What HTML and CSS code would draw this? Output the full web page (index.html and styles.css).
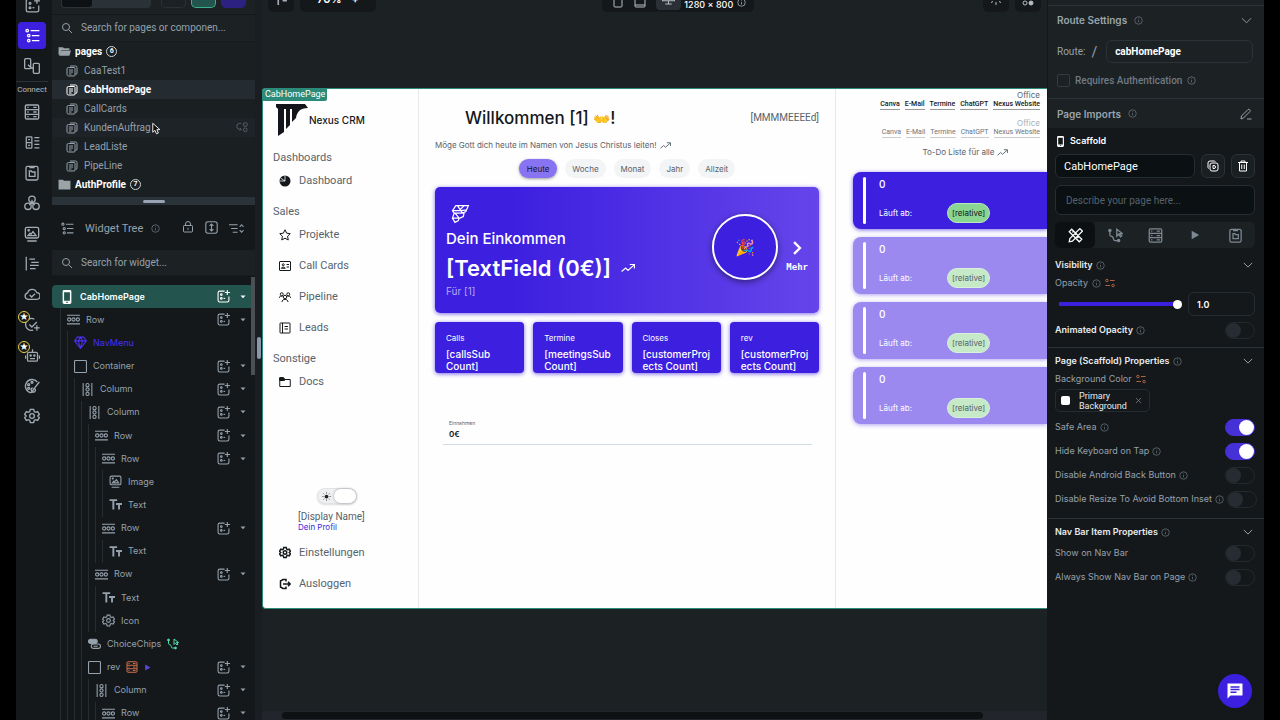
FILE: index.html
```html
<!DOCTYPE html>
<html lang="de">
<head>
<meta charset="utf-8">
<title>CabHomePage – Nexus CRM</title>
<link rel="stylesheet" href="styles.css">
</head>
<body>
<svg class="sprite" aria-hidden="true">
  <symbol id="search" viewBox="0 0 24 24"><circle cx="10" cy="10" r="7"/><path d="M15.5 15.5 22 22"/></symbol>
  <symbol id="info" viewBox="0 0 24 24"><circle cx="12" cy="12" r="10"/><path d="M12 11v6M12 6.500v2"/></symbol>
  <symbol id="chev" viewBox="0 0 24 24"><path d="M2 7l10 10L22 7"/></symbol>
  <symbol id="add" viewBox="0 0 24 24"><path d="M14 2H5a3 3 0 0 0-3 3v14a3 3 0 0 0 3 3h14a3 3 0 0 0 3-3v-7M19 0v9M14.500 4.500H24"/><circle cx="8" cy="8.500" r="1.500"/><circle cx="8" cy="15.500" r="1.500"/><path d="M12 15.500h3"/></symbol>
  <symbol id="list" viewBox="0 0 24 24"><circle cx="3.500" cy="4" r="2"/><circle cx="6" cy="12" r="2"/><circle cx="6" cy="20" r="2"/><path d="M9 4h14M11 12h12M11 20h12"/></symbol>
  <symbol id="flow" viewBox="0 0 24 24"><rect x="1" y="1" width="9" height="15" rx="1.500"/><rect x="14" y="8" width="9" height="15" rx="1.500"/><path d="M6 10l5 5h3"/></symbol>
  <symbol id="db" viewBox="0 0 24 24"><rect x="2" y="1.500" width="20" height="21" rx="2"/><path d="M2 8.500h20M2 15.500h20M14 5h5M14 12h5M14 19h5M5 5h2M5 12h2M5 19h2"/></symbol>
  <symbol id="types" viewBox="0 0 24 24"><rect x="2" y="3" width="9" height="18" rx="1"/><path d="M2 12h9M15 4h8M15 9.500h8M15 15h8M15 20.500h8M5 7.500h3M5 16.500h3"/></symbol>
  <symbol id="clip" viewBox="0 0 24 24"><rect x="3" y="2" width="18" height="20.500" rx="2.500"/><path d="M9 2v2h6V2M8 9h3l1 1.500h4.500V17H8z"/></symbol>
  <symbol id="cubes" viewBox="0 0 24 24"><circle cx="12" cy="6.500" r="4.800"/><circle cx="6" cy="17" r="4.800"/><circle cx="18" cy="17" r="4.800"/><path d="M12 7v5l-4 3M12 12l4 3"/></symbol>
  <symbol id="image" viewBox="0 0 24 24"><rect x="2" y="2" width="20" height="16" rx="2.500"/><path d="M5 22.500h14M6 14.500h12l-4.500-6-3 4-1.500-1.500z"/><circle cx="7" cy="6.500" r="1"/></symbol>
  <symbol id="gantt" viewBox="0 0 24 24"><path d="M2 1v22M7 5h9M10 10h12M8 15h14M8 20h9"/></symbol>
  <symbol id="cloud" viewBox="0 0 24 24"><path d="M6 20a5 5 0 0 1-.5-9.800A7 7 0 0 1 19 10a5 5 0 0 1 0 10zM8.500 13.500l3 3 5-5"/></symbol>
  <symbol id="checkadd" viewBox="0 0 24 24"><path d="M19 8l-8 8-4-4M15 3.500A9.500 9.500 0 1 0 13 21M19 13v9M14.500 17.500h9"/></symbol>
  <symbol id="robot" viewBox="0 0 24 24"><rect x="4" y="7" width="16" height="14" rx="2"/><path d="M12 7V2M1 12v5M23 12v5M8 17h8"/><circle cx="9" cy="12" r="1"/><circle cx="15" cy="12" r="1"/></symbol>
  <symbol id="palette" viewBox="0 0 24 24"><path d="M20 6A10 10 0 1 0 10 22c3 0 2-3 1-4s0-3 2-3"/><circle cx="7" cy="10" r="1.500"/><circle cx="12" cy="6.500" r="1.500"/><circle cx="7" cy="15.500" r="1.500"/><path d="M23 6l-8 10M15 16c-2 1-1 4-3 5 3 1 6-1 5-4z"/></symbol>
  <symbol id="gear" viewBox="0 0 24 24"><path d="M9.500 2h5l.8 3.200 2 1.200 3.200-1 2.500 4.300L20.600 12l2.400 2.300-2.500 4.300-3.200-1-2 1.200-.8 3.200h-5l-.8-3.200-2-1.200-3.200 1L1 14.300 3.400 12 1 9.700l2.500-4.300 3.200 1 2-1.200z"/><circle cx="12" cy="12" r="3.500"/></symbol>
  <symbol id="pagesic" viewBox="0 0 24 24"><path d="M8 2h11a3 3 0 0 1 3 3v11a3 3 0 0 1-3 3M5 5h11a2 2 0 0 1 2 2v13a2 2 0 0 1-2 2H5a3 3 0 0 1-3-3V8a3 3 0 0 1 3-3zM6 10h8M6 14h8M6 18h5"/></symbol>
  <symbol id="lock" viewBox="0 0 24 24"><rect x="3" y="9" width="18" height="13" rx="1.500"/><path d="M7 9V6a5 5 0 0 1 10 0v3M12 13.500v4"/></symbol>
  <symbol id="updown" viewBox="0 0 24 24"><rect x="1.500" y="1.500" width="21" height="21" rx="4"/><path d="M12 6v12M8.500 9 12 5.500 15.500 9M8.500 15l3.500 3.500 3.500-3.500"/></symbol>
  <symbol id="sort" viewBox="0 0 28 24"><path d="M0 5h16M4 12h12M7 19h9M20 9l3.500-4L27 9M20 15l3.500 4 3.500-4"/></symbol>
  <symbol id="phone" viewBox="0 0 24 24"><path fill="currentColor" fill-rule="evenodd" stroke="none" d="M7 0h10a2.500 2.500 0 0 1 2.500 2.500v19A2.500 2.500 0 0 1 17 24H7a2.500 2.500 0 0 1-2.500-2.500v-19A2.500 2.500 0 0 1 7 0zm0 4v14.500h10V4zm3.500 16v2h3v-2z"/></symbol>
  <symbol id="row" viewBox="0 0 24 24"><path d="M0 4h24M0 20h24"/><circle cx="4" cy="12" r="3"/><circle cx="12" cy="12" r="3"/><circle cx="20" cy="12" r="3"/></symbol>
  <symbol id="col" viewBox="0 0 24 24"><path d="M4 0v24M20 0v24"/><circle cx="12" cy="4" r="3"/><circle cx="12" cy="12" r="3"/><circle cx="12" cy="20" r="3"/></symbol>
  <symbol id="gem" viewBox="0 0 24 24"><path d="M6 2h12l5 7-11 14L1 9zM1 9h22M8 9l4 13 4-13-4-7z"/></symbol>
  <symbol id="box" viewBox="0 0 24 24"><rect x="1" y="1" width="22" height="22" rx="1.500"/></symbol>
  <symbol id="tt" viewBox="0 0 24 24"><path stroke-width="3.500" d="M1 4h14M8 4v17M13 11h11M18.500 11v10"/></symbol>
  <symbol id="chipsic" viewBox="0 0 24 24"><rect x="1" y="4" width="16" height="8" rx="4" fill="currentColor"/><rect x="6" y="13" width="17" height="8" rx="4"/><path d="M10 17h8"/></symbol>
  <symbol id="action" viewBox="0 0 24 24"><circle cx="3" cy="4" r="1.800" fill="currentColor"/><path d="M3 5v6c0 3 4 2 5 4s0 5 3 5h4M14 2v11l3-3 3 4 2-1.500-3-3.500h4z"/><circle cx="17" cy="20" r="1.800" fill="currentColor"/></symbol>
  <symbol id="play" viewBox="0 0 24 24"><path fill="currentColor" stroke="none" d="M4 2v20l18-10z"/></symbol>
  <symbol id="caret" viewBox="0 0 24 24"><path fill="currentColor" stroke="none" d="M2 6h20L12 17z"/></symbol>
  <symbol id="vars" viewBox="0 0 24 24"><circle cx="4.500" cy="6" r="3"/><circle cx="19.500" cy="18" r="3"/><path d="M12 6h11M1 18h11"/></symbol>
  <symbol id="trend" viewBox="0 0 24 24"><path d="M1 18l7-6 4 4L22 7M15 6h8v7"/></symbol>
  <symbol id="star" viewBox="0 0 24 24"><path d="M12 1.500l3.200 6.800 7.300 1-5.400 5.200 1.400 7.500L12 18.400 5.500 22l1.400-7.500L1.500 9.300l7.300-1z"/></symbol>
  <symbol id="card" viewBox="0 0 24 24"><rect x="1" y="3" width="22" height="18" rx="1"/><circle cx="8.500" cy="9.500" r="2"/><path d="M4.500 16.500c1-3 7-3 8 0zM15 9h5M15 14h5"/></symbol>
  <symbol id="people" viewBox="0 0 24 24"><circle cx="12" cy="12" r="3.500"/><circle cx="5.500" cy="6.500" r="3"/><circle cx="18.500" cy="6.500" r="3"/><path d="M6 22c0-7 12-7 12 0M0 14c1-4 4-4 7-3M24 14c-1-4-4-4-7-3"/></symbol>
  <symbol id="leads" viewBox="0 0 24 24"><rect x="2" y="2" width="20" height="20" rx="1"/><path d="M7 2v20M11 9h7M11 14h7"/></symbol>
  <symbol id="docs" viewBox="0 0 24 24"><path d="M1.500 21V3.500H9L11.500 7h11v14z"/><path fill="currentColor" d="M1.500 3.500H9L11 7v2H1.500z"/></symbol>
  <symbol id="logout" viewBox="0 0 24 24"><path d="M14 7V3H8L3 6v12l5 3h6v-4M8 12h14M18 7.500l4.500 4.500-4.500 4.500"/></symbol>
  <symbol id="pie" viewBox="0 0 24 24"><circle cx="12" cy="12" r="11" fill="currentColor" stroke="none"/><path stroke="#fff" stroke-width="1.500" d="M12 12 L12 1 M12 12 L3 6 M12 12H1"/></symbol>
  <symbol id="copy" viewBox="0 0 24 24"><rect x="6" y="6" width="16" height="16" rx="4"/><path d="M3 17a4 4 0 0 1-1-3V6a4 4 0 0 1 4-4h8c2 0 3 1 3 1M12 11v6h2a3 3 0 0 0 0-6z"/></symbol>
  <symbol id="trash" viewBox="0 0 24 24"><path d="M2 5h20M8 5V2h8v3M5 5v17h14V5M9.500 9v9M14.500 9v9"/></symbol>
  <symbol id="pencil" viewBox="0 0 24 24"><path d="M2 22l1-6L16 3c2-2 6 2 4 4L7 20zM14 22h9"/></symbol>
  <symbol id="design" viewBox="0 0 24 24"><path d="M6 2 22 18l-4 4L2 6zM19 1l4 4L7 21l-5 1 1-5zM9 5 7 7M13 9l-2 2M17 14l-2 2"/></symbol>
  <symbol id="x" viewBox="0 0 24 24"><path d="M3 3l18 18M21 3 3 21"/></symbol>
</svg>

<div class="app">
  <nav class="rail">
    <a class="rail-top" href="#"><svg class="i s15"><use href="#add"/></svg></a>
    <a class="rail-cell on" href="#"><svg class="i s15"><use href="#list"/></svg></a>
    <a class="rail-cell" href="#"><svg class="i s16"><use href="#flow"/></svg></a>
    <div class="rail-label">Connect</div>
    <div class="rail-group">
      <a class="rail-cell" href="#"><svg class="i s16"><use href="#db"/></svg></a>
      <a class="rail-cell" href="#"><svg class="i s15"><use href="#types"/></svg></a>
      <a class="rail-cell" href="#"><svg class="i s16"><use href="#clip"/></svg></a>
      <a class="rail-cell" href="#"><svg class="i s16"><use href="#cubes"/></svg></a>
      <a class="rail-cell" href="#"><svg class="i s16"><use href="#image"/></svg></a>
      <a class="rail-cell" href="#"><svg class="i s15"><use href="#gantt"/></svg></a>
      <a class="rail-cell" href="#"><svg class="i s16"><use href="#cloud"/></svg></a>
      <a class="rail-cell" href="#"><svg class="i s15"><use href="#checkadd"/></svg><span class="star">★</span></a>
      <a class="rail-cell" href="#"><svg class="i s15"><use href="#robot"/></svg><span class="star">★</span></a>
      <a class="rail-cell" href="#"><svg class="i s16"><use href="#palette"/></svg></a>
      <a class="rail-cell" href="#"><svg class="i s16"><use href="#gear"/></svg></a>
    </div>
  </nav>

  <aside class="panel">
    <div class="panel-top">
      <div class="seg"><span class="seg-on"></span></div>
      <span class="tb"></span><span class="tb green"></span><span class="tb violet"></span>
    </div>
    <label class="find"><svg class="i s12"><use href="#search"/></svg><input type="text" aria-label="Search pages" placeholder="Search for pages or componen..."></label>
    <ul class="pages">
      <li class="folder"><svg class="s13" viewBox="0 0 24 24"><path fill="#9aa3a8" d="M1 4h8l2 2h10v3H7l-3 9H1z"/><path fill="#9aa3a8" d="M7 10h17l-3 10H2z"/></svg>pages<span class="count">6</span></li>
      <li><svg class="i s12"><use href="#pagesic"/></svg>CaaTest1</li>
      <li class="sel"><svg class="i s12"><use href="#pagesic"/></svg>CabHomePage</li>
      <li><svg class="i s12"><use href="#pagesic"/></svg>CallCards</li>
      <li class="hover"><svg class="i s12"><use href="#pagesic"/></svg>KundenAuftrag
        <svg class="cursor" viewBox="0 0 12 16"><path d="M1 1v12l3-2.500 2 4.500 2.500-1-2-4.500h4z" fill="#111" stroke="#fff" stroke-width="1.200"/></svg>
        <svg class="i s11 end" viewBox="0 0 24 24"><path d="M9 3H6a5 5 0 0 0 0 13h3M6 13l3 3-3 3"/><rect x="14" y="2" width="8" height="7" rx="1"/><circle cx="18" cy="17" r="4"/></svg></li>
      <li><svg class="i s12"><use href="#pagesic"/></svg>LeadListe</li>
      <li><svg class="i s12"><use href="#pagesic"/></svg>PipeLine</li>
      <li class="folder"><svg class="s13" viewBox="0 0 24 24"><path fill="#9aa3a8" d="M1 3h8l2 2h12v16H1z"/></svg>AuthProfile<span class="count">7</span></li>
    </ul>
    <div class="hsplit"><span></span></div>
    <div class="tree-head"><svg class="i s13"><use href="#list"/></svg><span>Widget Tree</span><svg class="i s9 dim"><use href="#info"/></svg>
      <div class="tools"><svg class="i s12"><use href="#lock"/></svg><svg class="i s13"><use href="#updown"/></svg><svg class="i s15"><use href="#sort"/></svg></div>
    </div>
    <label class="find second"><svg class="i s12"><use href="#search"/></svg><input type="text" aria-label="Search widgets" placeholder="Search for widget..."></label>
    <div class="tree-wrap">
      <ul class="tree">
        <li class="root"><svg class="i s14"><use href="#phone"/></svg>CabHomePage<span class="ops"><svg class="i s13"><use href="#add"/></svg><svg class="i s6"><use href="#caret"/></svg></span></li>
        <li class="l1"><svg class="i s13"><use href="#row"/></svg>Row<span class="ops"><svg class="i s13"><use href="#add"/></svg><svg class="i s6"><use href="#caret"/></svg></span></li>
        <li class="l2 nav"><svg class="i s13"><use href="#gem"/></svg>NavMenu</li>
        <li class="l2"><svg class="i s13"><use href="#box"/></svg>Container<span class="ops"><svg class="i s13"><use href="#add"/></svg><svg class="i s6"><use href="#caret"/></svg></span></li>
        <li class="l3"><svg class="i s13"><use href="#col"/></svg>Column<span class="ops"><svg class="i s13"><use href="#add"/></svg><svg class="i s6"><use href="#caret"/></svg></span></li>
        <li class="l4"><svg class="i s13"><use href="#col"/></svg>Column<span class="ops"><svg class="i s13"><use href="#add"/></svg><svg class="i s6"><use href="#caret"/></svg></span></li>
        <li class="l5"><svg class="i s13"><use href="#row"/></svg>Row<span class="ops"><svg class="i s13"><use href="#add"/></svg><svg class="i s6"><use href="#caret"/></svg></span></li>
        <li class="l6"><svg class="i s13"><use href="#row"/></svg>Row<span class="ops"><svg class="i s13"><use href="#add"/></svg><svg class="i s6"><use href="#caret"/></svg></span></li>
        <li class="l7"><svg class="i s13"><use href="#image"/></svg>Image</li>
        <li class="l7"><svg class="i s13"><use href="#tt"/></svg>Text</li>
        <li class="l6"><svg class="i s13"><use href="#row"/></svg>Row<span class="ops"><svg class="i s13"><use href="#add"/></svg><svg class="i s6"><use href="#caret"/></svg></span></li>
        <li class="l7"><svg class="i s13"><use href="#tt"/></svg>Text</li>
        <li class="l5"><svg class="i s13"><use href="#row"/></svg>Row<span class="ops"><svg class="i s13"><use href="#add"/></svg><svg class="i s6"><use href="#caret"/></svg></span></li>
        <li class="l6"><svg class="i s13"><use href="#tt"/></svg>Text</li>
        <li class="l6"><svg class="i s13"><use href="#gear"/></svg>Icon</li>
        <li class="l4"><svg class="i s13"><use href="#chipsic"/></svg>ChoiceChips<svg class="i s12 mint"><use href="#action"/></svg></li>
        <li class="l4"><svg class="i s13"><use href="#box"/></svg>rev<svg class="i s12 orange"><use href="#db"/></svg><svg class="i s7 blue"><use href="#play"/></svg><span class="ops"><svg class="i s13"><use href="#add"/></svg><svg class="i s6"><use href="#caret"/></svg></span></li>
        <li class="l5"><svg class="i s13"><use href="#col"/></svg>Column<span class="ops"><svg class="i s13"><use href="#add"/></svg><svg class="i s6"><use href="#caret"/></svg></span></li>
        <li class="l6"><svg class="i s13"><use href="#row"/></svg>Row<span class="ops"><svg class="i s13"><use href="#add"/></svg><svg class="i s6"><use href="#caret"/></svg></span></li>
      </ul>
      <span class="vbar"></span>
    </div>
  </aside>

  <div class="vsplit"><span></span></div>

  <main class="canvas">
    <div class="canvas-top">
      <div class="pill short"><svg class="s13" viewBox="0 0 24 24"><path stroke="#aab" stroke-width="3" d="M6 0v22M14 14h8"/></svg></div>
      <div class="pill zoom">70%<span>+</span></div>
      <div class="pill devices">
        <svg class="i s12" viewBox="0 0 24 24"><rect x="4" y="0" width="16" height="22" rx="2"/></svg><svg class="i s12" viewBox="0 0 24 24"><rect x="2" y="0" width="20" height="22" rx="2"/><path d="M2 18h20"/></svg>
        <span class="desk"><svg class="i s13" viewBox="0 0 24 24"><path d="M1 2h22v14H1zM12 16v5M6 22h12"/></svg></span><b>1280 × 800</b><svg class="i s9"><use href="#info"/></svg></div>
      <div class="pill short right"><svg class="i s12" viewBox="0 0 24 24"><path d="M12 16v6M5 14l-2 4M19 14l2 4"/></svg></div>
      <div class="pill short"><svg class="i s12" viewBox="0 0 24 24"><circle cx="6" cy="18" r="4"/><circle cx="18" cy="18" r="4" fill="currentColor"/><path d="M2 10h20"/></svg></div>
    </div>

    <section class="board">
      <span class="tag">CabHomePage</span>
      <div class="side">
        <div class="brand"><svg viewBox="0 0 32 32"><path fill="#14151a" d="M0 0h29l3 4c-8 0-11 4-12 10l-4 4V5h-2v16l-4 4V5H8v23l-6 4V5L0 3z"/></svg>Nexus CRM</div>
        <h4>Dashboards</h4>
        <a href="#"><svg class="i s12"><use href="#pie"/></svg>Dashboard</a>
        <h4>Sales</h4>
        <a href="#"><svg class="i s12"><use href="#star"/></svg>Projekte</a>
        <a href="#"><svg class="i s12"><use href="#card"/></svg>Call Cards</a>
        <a href="#"><svg class="i s12"><use href="#people"/></svg>Pipeline</a>
        <a href="#"><svg class="i s12"><use href="#leads"/></svg>Leads</a>
        <h4>Sonstige</h4>
        <a href="#"><svg class="i s12"><use href="#docs"/></svg>Docs</a>
        <div class="profile">
          <div class="mode"><svg class="s9" viewBox="0 0 24 24"><circle cx="12" cy="12" r="5" fill="#222"/><path stroke="#222" stroke-width="2" d="M12 1v3M12 20v3M1 12h3M20 12h3M4 4l2 2M18 18l2 2M4 20l2-2M18 6l2-2"/></svg><span></span></div>
          <span class="who">[Display Name]</span>
          <a class="plain" href="#">Dein Profil</a>
        </div>
        <a href="#"><svg class="i s13 strong"><use href="#gear"/></svg>Einstellungen</a>
        <a href="#"><svg class="i s12 strong"><use href="#logout"/></svg>Ausloggen</a>
      </div>

      <div class="main">
        <header><h1>Willkommen [1] <span class="emoji">👐</span>!</h1><span>[MMMMEEEEd]</span></header>
        <p class="quote">Möge Gott dich heute im Namen von Jesus Christus leiten!<svg class="i s11"><use href="#trend"/></svg></p>
        <div class="chips"><button class="on">Heute</button><button>Woche</button><button>Monat</button><button>Jahr</button><button>Allzeit</button></div>
        <div class="hero">
          <div class="hero-text">
            <svg class="ff" viewBox="0 0 24 24"><path fill="none" stroke="#fff" stroke-width="1.500" d="M7 2h15l-3 7-4 2H5L3 8zM3 8h10l7-1M5 11l-2 6h9l4-2 1-5M3 17l3 5 4-2 1-3M9 2l6 9M17 2l-6 6M6 11l5 6"/></svg>
            <h2>Dein Einkommen</h2>
            <div class="amount">[TextField (0€)]<svg class="i s14"><use href="#trend"/></svg></div>
            <span class="for">Für [1]</span>
          </div>
          <div class="ring"><span class="emoji">🎉</span></div>
          <div class="more"><svg viewBox="0 0 24 24"><path fill="none" stroke="#fff" stroke-width="4" d="M7 2l10 10L7 22"/></svg>Mehr</div>
        </div>
        <div class="stats">
          <div><small>Calls</small><b>[callsSub Count]</b></div>
          <div><small>Termine</small><b>[meetingsSub Count]</b></div>
          <div><small>Closes</small><b>[customerProj ects Count]</b></div>
          <div><small>rev</small><b>[customerProj ects Count]</b></div>
        </div>
        <div class="income"><small>Einnahmen</small><b>0€</b></div>
      </div>

      <div class="office">
        <div class="links"><span>Office</span><nav><a href="#">Canva</a><a href="#">E-Mail</a><a href="#">Termine</a><a href="#">ChatGPT</a><a href="#">Nexus Website</a></nav></div>
        <div class="links faded"><span>Office</span><nav><a href="#">Canva</a><a href="#">E-Mail</a><a href="#">Termine</a><a href="#">ChatGPT</a><a href="#">Nexus Website</a></nav></div>
        <p class="todo">To-Do Liste für alle<svg class="i s11"><use href="#trend"/></svg></p>
        <div class="task"><i></i><div><b>0</b><p><span>Läuft ab:</span><em>[relative]</em></p></div></div>
        <div class="task pale"><i></i><div><b>0</b><p><span>Läuft ab:</span><em>[relative]</em></p></div></div>
        <div class="task pale"><i></i><div><b>0</b><p><span>Läuft ab:</span><em>[relative]</em></p></div></div>
        <div class="task pale"><i></i><div><b>0</b><p><span>Läuft ab:</span><em>[relative]</em></p></div></div>
      </div>
    </section>
    <div class="hbar"><span></span></div>
  </main>

  <aside class="inspector">
    <div class="upper">
      <div class="cap"></div>
      <div class="head">Route Settings<svg class="i s9"><use href="#info"/></svg><svg class="i s11 end"><use href="#chev"/></svg></div>
      <div class="route"><label for="route">Route:</label><span>/</span><input id="route" type="text" value="cabHomePage"></div>
      <label class="auth"><input type="checkbox">Requires Authentication<svg class="i s9"><use href="#info"/></svg></label>
      <div class="head line">Page Imports<svg class="i s9"><use href="#info"/></svg><svg class="i s12 end"><use href="#pencil"/></svg></div>
    </div>
    <div class="group">
      <div class="scaffold"><svg class="i s11"><use href="#phone"/></svg>Scaffold</div>
      <div class="name"><input type="text" aria-label="Page name" value="CabHomePage"><button aria-label="Copy"><svg class="i s12"><use href="#copy"/></svg></button><button aria-label="Delete"><svg class="i s12"><use href="#trash"/></svg></button></div>
      <input class="desc" type="text" aria-label="Description" placeholder="Describe your page here...">
      <div class="tabs"><button class="on" aria-label="Design"><svg class="i s15"><use href="#design"/></svg></button><button aria-label="Actions"><svg class="i s15"><use href="#action"/></svg></button><button aria-label="Backend"><svg class="i s15"><use href="#db"/></svg></button><button aria-label="Animations"><svg class="i s10"><use href="#play"/></svg></button><button aria-label="Docs"><svg class="i s15"><use href="#clip"/></svg></button></div>
      <div class="title first">Visibility<svg class="i s9"><use href="#info"/></svg><svg class="i s10 end"><use href="#chev"/></svg></div>
      <div class="field">Opacity<svg class="i s9"><use href="#info"/></svg><svg class="i s10 orange"><use href="#vars"/></svg></div>
      <div class="slide"><input type="range" min="0" max="1" step="0.1" value="1" aria-label="Opacity"><input type="text" value="1.0" aria-label="Opacity value"></div>
      <label class="title anim">Animated Opacity<svg class="i s9"><use href="#info"/></svg><input class="toggle" type="checkbox"></label>
    </div>
    <div class="group">
      <div class="title">Page (Scaffold) Properties<svg class="i s9"><use href="#info"/></svg><svg class="i s10 end"><use href="#chev"/></svg></div>
      <div class="field">Background Color<svg class="i s10 orange"><use href="#vars"/></svg></div>
      <div class="color"><i></i><span>Primary Background</span><button aria-label="Clear"><svg class="i s7"><use href="#x"/></svg></button></div>
      <label class="opt">Safe Area<svg class="i s9"><use href="#info"/></svg><input class="toggle" type="checkbox" checked></label>
      <label class="opt">Hide Keyboard on Tap<svg class="i s9"><use href="#info"/></svg><input class="toggle" type="checkbox" checked></label>
      <label class="opt">Disable Android Back Button<svg class="i s9"><use href="#info"/></svg><input class="toggle" type="checkbox"></label>
      <label class="opt">Disable Resize To Avoid Bottom Inset<svg class="i s9"><use href="#info"/></svg><input class="toggle" type="checkbox"></label>
    </div>
    <div class="group last">
      <div class="title">Nav Bar Item Properties<svg class="i s9"><use href="#info"/></svg><svg class="i s10 end"><use href="#chev"/></svg></div>
      <label class="opt">Show on Nav Bar<input class="toggle" type="checkbox"></label>
      <label class="opt">Always Show Nav Bar on Page<svg class="i s9"><use href="#info"/></svg><input class="toggle" type="checkbox"></label>
    </div>
    <button class="fab" aria-label="Chat"><svg viewBox="0 0 24 24"><path fill="#fff" d="M2 2h20v16H6l-4 4z"/><path stroke="#3d1fe0" stroke-width="2" d="M6 6.500h12M6 10h12M6 13.500h8"/></svg></button>
  </aside>
</div>
</body>
</html>
```

FILE: styles.css
```css
* { box-sizing: border-box; }
body {
  margin: 0;
  background: #000;
  color: #95a1ac;
  font-family: Roboto, "Liberation Sans", sans-serif;
  font-size: 10px;
  line-height: 12px;
}
ul, h1, h2, h4, p { margin: 0; padding: 0; list-style: none; }
a { color: inherit; text-decoration: none; }
button, input { font: inherit; color: inherit; padding: 0; margin: 0; border: 0; background: none; min-width: 0; }
input::placeholder { color: inherit; opacity: 1; }
.sprite { display: none; }
svg { flex: none; }
.i { fill: none; stroke: currentColor; stroke-width: 2; overflow: visible; }
.s6 { width: 6px; height: 6px; }
.s7 { width: 7px; height: 7px; }
.s9 { width: 9px; height: 9px; }
.s10 { width: 10px; height: 10px; }
.s11 { width: 11px; height: 11px; }
.s12 { width: 12px; height: 12px; }
.s13 { width: 13px; height: 13px; }
.s14 { width: 14px; height: 14px; }
.s15 { width: 15px; height: 15px; }
.s16 { width: 16px; height: 16px; }
.end { margin-left: auto; }
.orange { color: #d0704f; }
.mint { color: #4fe3b0; }
.blue { color: #5a45e0; }
.dim { opacity: 0.7; }
.tree, .board, .pill, .head, .scaffold, .title, .field, .opt, .slide { font-family: Inter, "Liberation Sans", sans-serif; }

.app {
  display: grid;
  grid-template-columns: 36px 203px 7px 1fr 217px;
  height: 100vh;
  margin: 0 16px;
  overflow: hidden;
}

/* icon rail */
.rail { background: #14181b; padding-right: 4px; display: flex; flex-direction: column; align-items: center; color: #a3acb4; }
.rail-top { display: flex; align-items: flex-end; height: 13px; margin-bottom: 9px; overflow: hidden; }
.rail-cell { position: relative; display: flex; align-items: center; justify-content: center; width: 28px; height: 30px; }
.rail > .rail-cell.on { height: 27px; margin-bottom: 2px; border-radius: 4px; background: #3d1fe0; color: #fff; }
.rail-label { width: 32px; padding-top: 2px; border-top: 1px solid #2b3238; margin-bottom: 1px; font-size: 8px; text-align: center; color: #b5bcc2; }
.rail-group { display: flex; flex-direction: column; justify-content: space-between; min-height: 334px; }
.star {
  position: absolute; left: 0; top: 1px; width: 12px; height: 12px; border: 1px solid #e8d44d; border-radius: 50%;
  background: #14181b; color: #fff; font: 10px/10px "DejaVu Sans", sans-serif; text-align: center;
}

/* left panel */
.panel { display: flex; flex-direction: column; min-height: 0; overflow: hidden; background: #14181b; }
.panel-top { display: flex; flex: none; height: 14px; padding: 0 7px 0 9px; background: #1c2124; }
.seg { width: 90px; height: 8px; border-radius: 0 0 4px 4px; background: #2a3238; margin-right: 10px; }
.seg-on { display: block; width: 32px; height: 8px; border: 1px solid #2a3238; border-top: 0; border-radius: 0 0 4px 4px; background: #0e1113; }
.tb { width: 25px; height: 8px; margin-right: 5px; border: 1px solid #2a3238; border-top: 0; border-radius: 0 0 5px 5px; }
.tb.green { border-color: #39b08c; background: #24544e; }
.tb.violet { margin-right: 0; border-color: #2c2080; background: #2c2080; }
.find { display: flex; flex: none; align-items: center; gap: 8px; height: 28px; padding: 0 9px; border-top: 1px solid #14181b; border-bottom: 1px solid #171b1e; background: #1c2124; }
.find input { flex: 1; }
.find.second { height: 27px; margin-top: -1px; margin-bottom: 1px; }
.pages { flex: none; padding-bottom: 3px; background: #1a1f22; }
.pages li { display: flex; align-items: center; gap: 6px; height: 19px; padding: 0 7px 0 14px; position: relative; }
.pages .folder { padding-left: 6px; gap: 4px; color: #fff; font-weight: 700; }
.pages .sel { background: #252c31; color: #fff; font-weight: 700; }
.pages .hover { background: #1e2327; }
.hover .end { color: #59636b; }
.count { width: 11px; height: 11px; border: 1px solid #cfd4d8; border-radius: 50%; font-size: 7px; line-height: 9px; text-align: center; }
.cursor { position: absolute; left: 100px; top: 4px; width: 9px; height: 13px; }
.hsplit { display: flex; flex: none; align-items: center; justify-content: center; height: 8px; background: #2a323a; }
.hsplit span { width: 22px; height: 3px; border-radius: 2px; background: #9aa3b5; }
.tree-head { display: flex; flex: none; align-items: center; height: 45px; padding: 2px 11px 0 9px; gap: 8px; font-size: 11px; }
.tree-head > :first-child { margin-right: 3px; }
.tools { display: flex; gap: 11px; margin-left: auto; }
.tree-wrap { position: relative; padding-top: 8px; }
.tree { display: grid; grid-auto-rows: 1fr; min-height: 440px; }
.tree li {
  display: flex; align-items: center; gap: 6px; padding: 0 9px 0 calc(8px + var(--in)); font-size: 9px; white-space: nowrap;
  background: repeating-linear-gradient(to right, #262d31 0 1px, transparent 1px 7px) 8px 0 / var(--in) 100% no-repeat;
}
.tree .root { --in: 0px; border-radius: 4px; background: #24544e; color: #fff; font-weight: 600; }
.tree .nav { color: #4a2ff0; }
.ops { display: flex; align-items: center; gap: 10px; margin-left: auto; }
.l1 { --in: 7px; }
.l2 { --in: 14px; }
.l3 { --in: 21px; }
.l4 { --in: 28px; }
.l5 { --in: 35px; }
.l6 { --in: 42px; }
.l7 { --in: 49px; }
.vbar { position: absolute; right: 0; top: 0; width: 4px; height: 98px; background: #4b5054; }
.vsplit { display: flex; align-items: center; justify-content: center; padding-bottom: 24px; background: #1a1e23; }
.vsplit span { width: 4px; height: 22px; border-radius: 2px; background: #8d95a8; }

/* canvas */
.canvas { display: flex; flex-direction: column; min-width: 0; background: #1c2124; }
.canvas-top { position: relative; display: flex; height: 88px; flex: none; padding: 0 6px; gap: 6px; align-items: flex-start; }
.pill { display: flex; align-items: flex-end; justify-content: center; height: 12px; border-radius: 0 0 5px 5px; background: #14181b; overflow: hidden; color: #b5bcc2; }
.pill.short { width: 26px; padding-bottom: 6px; }
.pill.right { margin-left: auto; }
.pill.zoom { width: 76px; gap: 10px; padding-bottom: 7px; font-size: 11px; font-weight: 600; color: #fff; }
.pill.devices { position: absolute; left: 340px; width: 152px; padding: 0 8px 0 10px; justify-content: space-between; align-items: center; }
.pill.devices svg { margin-top: -8px; }
.pill.devices > svg:nth-child(-n+2) { margin-right: 6px; }
.pill.devices b { margin-top: -3px; font-size: 9px; font-weight: 500; color: #fff; white-space: nowrap; }
.desk { display: flex; padding: 0 6px; background: #2a3035; border-radius: 0 0 4px 4px; height: 10px; margin-top: -2px; }
.hbar { margin-top: auto; padding: 1px 64px 1px 20px; background: #22262c; }
.hbar span { display: block; height: 7px; border-radius: 4px; background: #0e1112; }

.board {
  position: relative; display: grid; grid-template-columns: 156px 1fr 211px; min-height: 521px;
  border: 1px solid #2b8a78; border-right: 0; border-radius: 3px 0 0 4px; background: #fefefe; color: #57636c; overflow: hidden;
}
.tag { position: absolute; left: 0; top: 0; height: 12px; padding: 0 2px; border-radius: 0 0 2px 0; background: #2b8a78; color: #fff; font: 9px/11px Roboto, sans-serif; }
.side { display: flex; flex-direction: column; padding: 15px 10px 9px; border-right: 1px solid #e6e8ea; }
.brand { display: flex; align-items: center; gap: 1px; height: 32px; margin: 0 3px 6px; color: #14181b; font-size: 10px; font-weight: 500; }
.brand svg { width: 32px; height: 32px; }
.side h4 { height: 15px; margin-top: 8px; font: 400 11px/15px Roboto, sans-serif; }
.side > a { display: flex; align-items: center; gap: 8px; height: 31px; padding-left: 6px; font: 11px/14px Roboto, sans-serif; }
.side > a svg { color: #14181b; width: 12px; }
.side .strong { stroke-width: 3; }
.profile { display: flex; flex-direction: column; margin: auto 0 5px 25px; }
.mode { display: flex; align-items: center; justify-content: space-between; width: 40px; height: 16px; margin: 0 0 7px 19px; padding-left: 4px; border: 1px solid #e0e3e7; border-radius: 8px; background: #eef0f2; box-shadow: 0 1px 2px #0002; }
.mode span { width: 22px; height: 14px; border-radius: 7px; background: #fff; box-shadow: 0 0 3px #0005; }
.who { font: 10px/11px Roboto, sans-serif; }
.plain { color: #3d1fe0; font-size: 8px; line-height: 10px; }

.main { padding: 16px 16px; min-width: 0; border-right: 1px solid #e6e8ea; }
.main header { display: flex; align-items: center; justify-content: space-between; height: 26px; padding-left: 30px; white-space: nowrap; }
.main header > span { font: 10px/12px Roboto, sans-serif; }
h1 { color: #14181b; font-size: 17px; line-height: 22px; font-weight: 500; }
h1 .emoji { font-size: 14px; }
.quote { display: flex; align-items: center; gap: 4px; height: 16px; margin-top: 6px; font-size: 8px; white-space: nowrap; }
.chips { display: flex; justify-content: center; gap: 8px; margin-top: 6px; }
.chips button { height: 19px; padding: 0 7px; border-radius: 10px; background: #f3f4f5; font-size: 8px; }
.chips .on { padding: 0 8px; background: #8873f2; color: #14181b; box-shadow: 0 1px 3px #0006; }
.hero {
  display: flex; align-items: center; height: 126px; margin-top: 9px; padding: 0 11px; border-radius: 5px;
  background: linear-gradient(to right, #3d1fe0 20%, #6545ea); box-shadow: 0 1px 4px #3d1fe0aa; color: #fff;
}
.hero-text { flex: 1; white-space: nowrap; }
.ff { display: block; width: 20px; height: 20px; margin-left: 4px; }
h2 { margin-top: 5px; font-size: 15px; line-height: 20px; font-weight: 500; }
.amount { display: flex; align-items: center; gap: 10px; margin-top: 5px; font-size: 22px; line-height: 28px; font-weight: 600; }
.for { display: block; margin-top: 3px; font-size: 10px; color: #b7a9f5; }
.ring { display: flex; align-items: center; justify-content: center; width: 66px; height: 66px; margin: 0 8px 6px 0; border: 2px solid #fff; border-radius: 50%; background: #3d1fe0; box-shadow: 0 2px 6px #0007; font-size: 16px; line-height: 20px; }
.more { display: flex; flex-direction: column; align-items: center; gap: 6px; margin-top: 14px; font: bold 9px/12px "DejaVu Sans Mono", monospace; }
.more svg { width: 14px; height: 14px; }
.stats { display: grid; grid-template-columns: repeat(4, 1fr); gap: 9px; margin-top: 9px; }
.stats div { height: 51px; padding: 9px 10px 0 11px; border-radius: 4px; background: #3d1fe0; color: #fff; box-shadow: 0 1px 4px #3d1fe0aa; overflow: hidden; }
.stats small { display: block; font-size: 8px; line-height: 14px; }
.stats b { display: block; margin-top: 3px; font-size: 10px; font-weight: 500; }
.income { margin: 45px 7px 0 8px; padding: 0 0 4px 6px; border-bottom: 1px solid #cfdde2; }
.income small { display: block; font-size: 5px; line-height: 10px; }
.income b { display: block; font-size: 8px; line-height: 12px; font-weight: 600; color: #14181b; }

.office { padding: 2px 0 0 17px; min-width: 0; }
.links { display: flex; flex-direction: column; align-items: flex-end; padding: 0 7px 9px 0; line-height: 9px; font-size: 8px; }
.links nav { display: flex; gap: 5px; font-family: Roboto, sans-serif; font-size: 7px; white-space: nowrap; }
.links a { color: #14181b; font-weight: 500; border-bottom: 1px solid #999; }
.links.faded { color: #a9b0b5; padding-bottom: 4px; }
.links.faded a { color: #6b757c; font-weight: 400; border-color: #ccc; }
.todo { display: flex; justify-content: center; align-items: center; gap: 3px; height: 20px; margin: 0 0 10px 31px; font-size: 8px; }
.task { display: flex; gap: 12px; height: 57px; margin-bottom: 8px; padding: 5px 0 5px 10px; border-radius: 8px 0 0 8px; background: #3d1fe0; color: #fff; box-shadow: 0 1px 4px #3d1fe0aa; }
.task.pale { background: #9b89f0; box-shadow: 0 1px 4px #3d1fe066; }
.task i { width: 3px; border-radius: 2px; background: #fff; }
.task b { display: block; margin-left: 1px; font-size: 10px; line-height: 15px; font-weight: 500; }
.task p { display: flex; align-items: center; margin: 11px 0 0 1px; font-size: 8px; }
.task p span { width: 68px; }
.task em { height: 20px; padding: 0 4px; border: 1px solid #b8e8c0; border-radius: 10px; background: #8ad592; color: #14181b; font-style: normal; line-height: 18px; }
.task.pale em { background: #c6e9c8; color: #57636c; border-color: #d8f0dc; }

/* inspector */
.inspector { position: relative; background: #14181b; min-width: 0; padding-left: 1px; }
.upper { background: #1c2124; }
.cap { height: 6px; border-bottom: 1px solid #2b3238; }
.head { display: flex; align-items: center; gap: 7px; height: 28px; padding: 0 12px 0 9px; font-weight: 600; color: #9aa5ad; }
.head.line { height: 30px; border-top: 1px solid #2b3238; }
.head .s9 { color: #68737b; }
.route { display: flex; align-items: center; margin-top: 6px; padding: 0 11px 0 9px; height: 23px; }
.route span { margin: 0 9px 0 6px; font-size: 14px; }
.route input { flex: 1; height: 23px; padding: 0 8px; border: 1px solid #2b3238; border-radius: 6px; color: #fff; font-weight: 700; font-size: 10px; }
.auth { display: flex; align-items: center; gap: 5px; height: 13px; margin: 11px 0; padding-left: 9px; color: #6f7b84; font-weight: 500; }
.auth input { appearance: none; width: 13px; height: 13px; border: 1px solid #343c42; border-radius: 2px; }
.group { padding: 0 9px 0 7px; border-bottom: 1px solid #2b3238; }
.group.last { border: 0; }
.scaffold { display: flex; align-items: center; gap: 4px; height: 26px; color: #fff; font-size: 9px; font-weight: 600; }
.name { display: flex; gap: 6px; }
.name input { flex: 1; height: 24px; padding: 0 8px; border: 1px solid #262d32; border-radius: 6px; background: #0b1013; color: #fff; font-size: 11px; }
.name button { display: flex; align-items: center; justify-content: center; width: 24px; height: 24px; border: 1px solid #2b3238; border-radius: 6px; background: #1a1f22; color: #fff; }
.desc { display: block; width: 100%; height: 30px; margin-top: 7px; padding: 0 10px; border: 1px solid #262d32; border-radius: 6px; background: #0b1013; }
.desc::placeholder { color: #56616a; }
.tabs { display: grid; grid-template-columns: repeat(5, 1fr); height: 26px; margin-top: 7px; border-radius: 5px; background: #1c2124; }
.tabs button { display: flex; align-items: center; justify-content: center; color: #7d8992; }
.tabs .on { border-radius: 5px; background: #0d1012; color: #fff; }
.title { display: flex; align-items: center; gap: 3px; height: 18px; margin-top: 4px; padding-right: 2px; color: #e8ebed; font-size: 9px; font-weight: 600; white-space: nowrap; }
.title.first { margin-top: 8px; }
.title > svg:not(.end), .field > svg, .opt > svg { color: #68737b; }
.title .end { color: #b5bcc2; }
.field { display: flex; align-items: center; gap: 4px; height: 18px; font-size: 9px; }
.field > svg.orange { color: #d0704f; }
.slide { display: flex; align-items: center; gap: 6px; }
.slide [type=range] { flex: 1; appearance: none; height: 9px; margin-left: 4px; background: linear-gradient(#3d1fe0, #3d1fe0) center / 100% 4px no-repeat; }
.slide [type=range]::-webkit-slider-thumb { appearance: none; width: 9px; height: 9px; border-radius: 50%; background: #fff; }
.slide [type=text] { width: 67px; height: 24px; padding: 0 8px; border: 1px solid #262d32; border-radius: 6px; color: #fff; font-size: 9px; font-weight: 600; }
.title.anim { margin: 5px 0 8px; padding: 0; }
.toggle { appearance: none; flex: none; width: 30px; height: 17px; margin-left: auto; border: 1px solid #23292d; border-radius: 9px; }
.toggle::before { content: ""; display: block; width: 15px; height: 15px; border-radius: 50%; background: #262c31; }
.toggle:checked { background: #4630d8; border-color: #4630d8; }
.toggle:checked::before { margin-left: 13px; background: #fff; }
.color { display: inline-flex; align-items: center; gap: 9px; height: 23px; margin: 1px 0 3px; padding: 0 7px 0 5px; border: 1px solid #262d32; border-radius: 5px; vertical-align: top; }
.color i { width: 9px; height: 9px; border-radius: 2px; background: #fff; }
.color span { width: 47px; font-size: 9px; line-height: 10px; color: #e8ebed; }
.opt { display: flex; align-items: center; gap: 3px; height: 24px; font-size: 9px; white-space: nowrap; }
.opt:last-child { margin-bottom: 7px; }
.fab { position: absolute; right: 12px; bottom: 12px; display: flex; align-items: center; justify-content: center; width: 34px; height: 34px; border-radius: 50%; background: #3d1fe0; }
.fab svg { width: 18px; height: 18px; }
```
